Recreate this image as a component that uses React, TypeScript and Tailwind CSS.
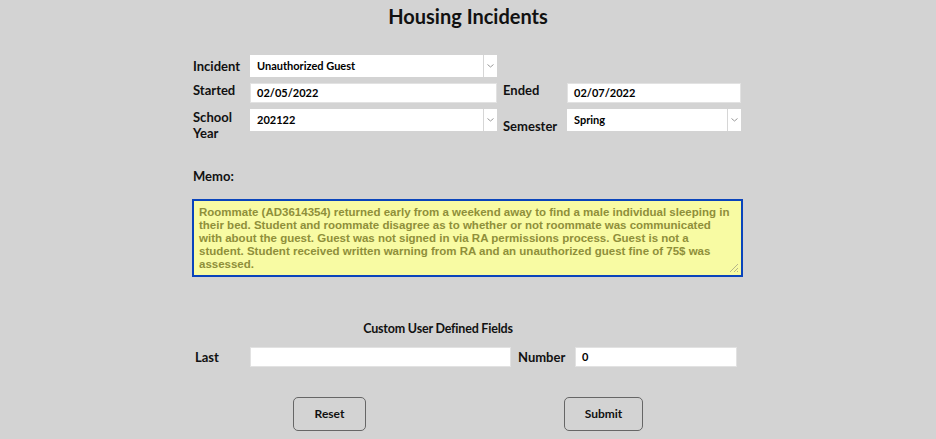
import { FC } from 'react';

const label = "text-[13px] font-bold text-[#111] leading-[16px]";
const field = "h-[20px] bg-white border border-[#e2e2e2] px-[6px] text-[11px] font-bold text-black flex items-center";

const Select: FC<{ value: string; className?: string }> = ({ value, className }) => (
  <div className={`flex h-[22px] bg-white ${className ?? ''}`}>
    <div className="flex flex-1 items-center px-[7px] text-[11px] font-bold text-black">{value}</div>
    <div className="flex w-[14px] items-center justify-center border-l border-[#d6d6d6]">
      <svg width="7" height="4" viewBox="0 0 7 4"><path d="M0.5 0.5 L3.5 3 L6.5 0.5" fill="none" stroke="#999" strokeWidth="1" /></svg>
    </div>
  </div>
);

const App: FC = () => (
  <div className="h-[439px] w-[936px] bg-[#d3d3d3] font-['Lato','DejaVu_Sans',sans-serif] text-[#111]">
    <h1 className="pt-[4px] text-center text-[20px] font-bold leading-[24px] text-[#111]">Housing Incidents</h1>

    <div className="ml-[193px] mt-[27px] w-[550px]">
      <div className="flex items-center">
        <span className={`${label} w-[57px]`}>Incident</span>
        <Select value="Unauthorized Guest" className="w-[247px]" />
      </div>

      <div className="mt-[6px] flex">
        <span className={`${label} w-[57px] -mt-[1px]`}>Started</span>
        <div className={`${field} w-[247px]`}>02/05/2022</div>
        <span className={`${label} ml-[6px] w-[64px] -mt-[1px]`}>Ended</span>
        <div className={`${field} w-[174px]`}>02/07/2022</div>
      </div>

      <div className="mt-[6px] flex">
        <span className={`${label} w-[57px]`}>School<br />Year</span>
        <Select value="202122" className="w-[247px]" />
        <span className={`${label} ml-[6px] w-[64px] pt-[9px]`}>Semester</span>
        <Select value="Spring" className="w-[174px]" />
      </div>

      <div className={`${label} mt-[27px]`}>Memo:</div>

      <div className="mt-[15px] -ml-[1px] h-[78px] w-[551px] border-2 border-[#0a44bb] bg-[#f8fba3] px-[5px] pt-[5px] relative">
        <p className="font-['Liberation_Sans',Arial,sans-serif] text-[11.5px] font-bold leading-[13px] text-[#8f8f3a]">
          Roommate (AD3614354) returned early from a weekend away to find a male individual sleeping in their bed. Student and roommate disagree as to whether or not roommate was communicated with about the guest. Guest was not signed in via RA permissions process. Guest is not a student. Student received written warning from RA and an unauthorized guest fine of 75$ was assessed.
        </p>
        <svg className="absolute bottom-[2px] right-[2px]" width="12" height="12" viewBox="0 0 12 12">
          <path d="M11 3 L3 11 M11 7 L7 11 M11 10 L10 11" stroke="#b5b58a" strokeWidth="1" />
        </svg>
      </div>
    </div>

    <div className="mt-[44px] ml-[358px] w-[160px] whitespace-nowrap text-center text-[12.5px] font-bold leading-[16px] tracking-[-0.2px]">Custom User Defined Fields</div>

    <div className="ml-[195px] mt-[10px] flex items-center">
      <span className={`${label} w-[55px]`}>Last</span>
      <div className={`${field} w-[261px]`}></div>
      <span className={`${label} ml-[7px] w-[57px]`}>Number</span>
      <div className={`${field} w-[162px]`}>0</div>
    </div>

    <div className="mt-[30px] flex">
      <button className="ml-[293px] h-[34px] w-[73px] rounded-[5px] border border-[#666] text-[12px] font-bold text-[#111]">Reset</button>
      <button className="ml-[198px] h-[34px] w-[79px] rounded-[5px] border border-[#666] text-[12px] font-bold text-[#111]">Submit</button>
    </div>
  </div>
);

export default App;
